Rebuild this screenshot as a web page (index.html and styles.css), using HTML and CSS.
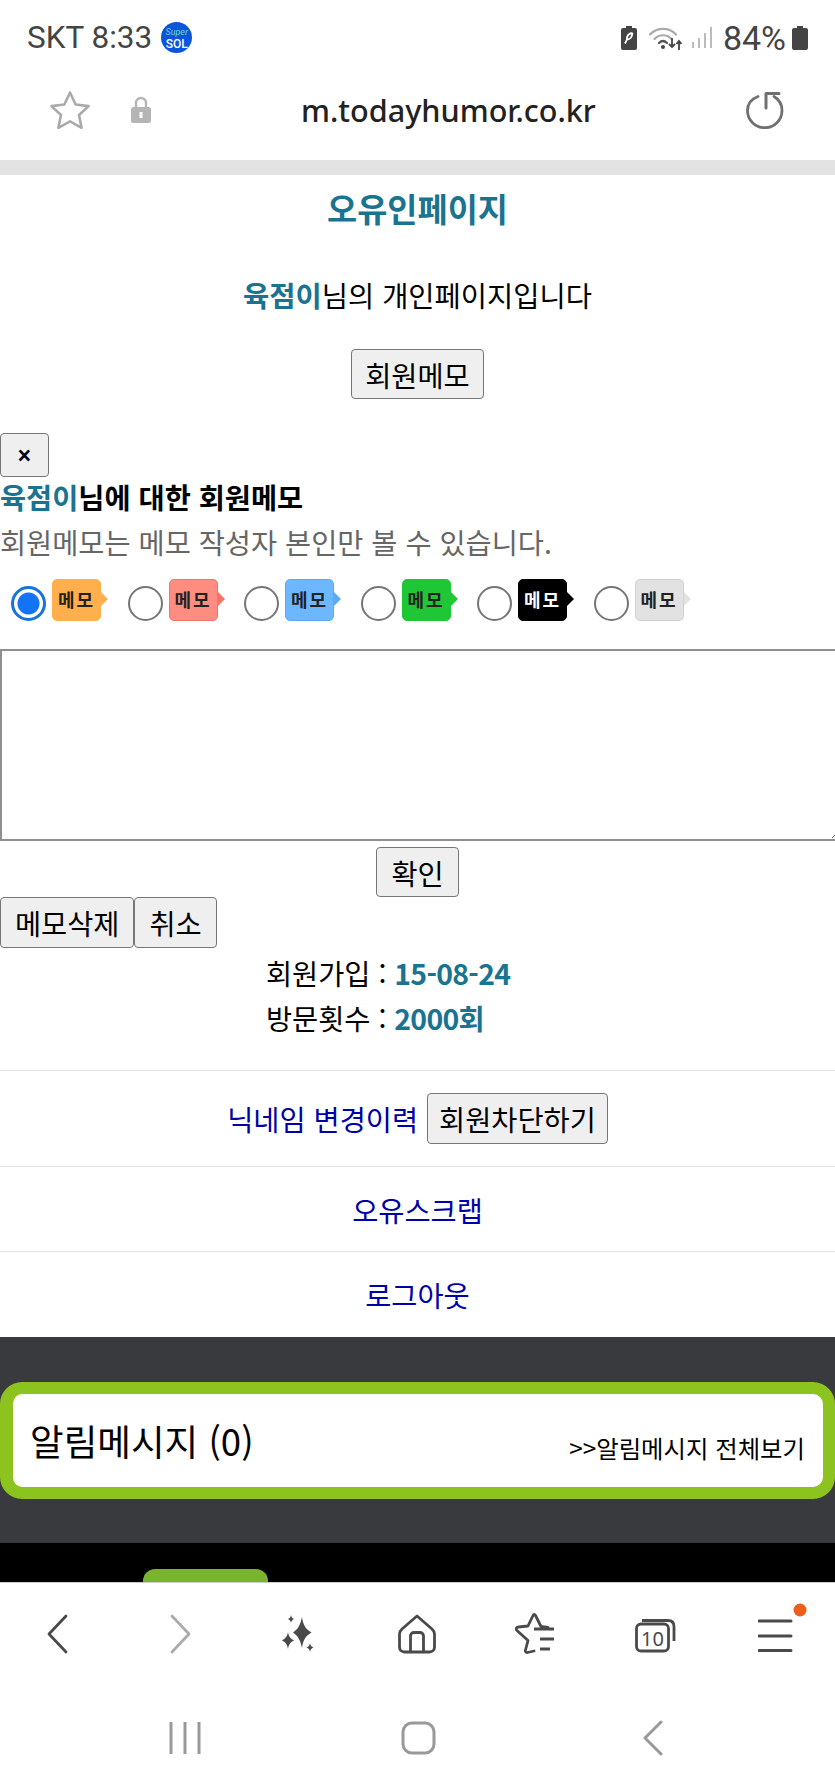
FILE: index.html
```html
<!DOCTYPE html>
<html lang="ko">
<head>
    <meta charset="UTF-8">
    <meta name="viewport" content="width=device-width, initial-scale=1.0">
    <title>오유인페이지</title>
    <link rel="stylesheet" href="styles.css">
</head>
<body>

    <!-- 상태바 -->
    <div class="status-bar">
        <span class="status-text status-left">SKT 8:33</span>
        <span class="sol-badge"><i>Super</i><b>SOL</b></span>
        <div class="status-right">
            <svg class="ic-charge" width="16" height="24" viewBox="0 0 16 24">
                <path d="M5 0h6v2h3a2 2 0 0 1 2 2v18a2 2 0 0 1-2 2H2a2 2 0 0 1-2-2V4a2 2 0 0 1 2-2h3z" fill="#444"/>
                <path d="M11.500 7c-4 .5-6 3-5.500 6.500l-2 4M6 13.500c3 0 5-2 5.500-6.500" fill="none" stroke="#fff" stroke-width="1.800"/>
            </svg>
            <svg class="ic-wifi" width="33" height="24" viewBox="0 0 33 24">
                <g fill="none" stroke="#aaa" stroke-width="2.200" stroke-linecap="round">
                    <path d="M1 8.500C8 1 20 1 27 8.500"/>
                    <path d="M5.500 13C10 8 18 8 22.500 13"/>
                </g>
                <path d="M10 17c2.500-2.500 5.500-2.500 8 0" fill="none" stroke="#555" stroke-width="2.200" stroke-linecap="round"/>
                <circle cx="14" cy="21" r="2" fill="#444"/>
                <path d="M23 12v9m-3-3 3 3 3-3" fill="none" stroke="#444" stroke-width="1.800"/>
                <path d="M30 24V15m-2.500 3 2.500-3 2.500 3" fill="none" stroke="#444" stroke-width="1.800"/>
            </svg>
            <svg class="ic-signal" width="20" height="21" viewBox="0 0 20 21">
                <g fill="#bbb">
                    <rect x="0" y="15" width="2" height="6"/>
                    <rect x="6" y="11" width="2" height="10"/>
                    <rect x="12" y="6" width="2" height="15"/>
                    <rect x="18" y="0" width="2" height="21"/>
                </g>
            </svg>
            <span class="status-text status-pct">84%</span>
            <svg class="ic-battery" width="16" height="24" viewBox="0 0 16 24">
                <path d="M5 0h6v2h3a2 2 0 0 1 2 2v18a2 2 0 0 1-2 2H2a2 2 0 0 1-2-2V4a2 2 0 0 1 2-2h3z" fill="#444"/>
            </svg>
        </div>
    </div>

    <!-- 주소창 -->
    <div class="address-bar">
        <svg class="ic-fav" width="42" height="40" viewBox="0 0 42 40">
            <path d="M21 2.500l5.600 12 13 1.600-9.600 8.900 2.600 12.800L21 31.400 9.400 37.800 12 25 2.400 16.100l13-1.600z" fill="none" stroke="#aaa" stroke-width="2.600" stroke-linejoin="round"/>
        </svg>
        <svg class="ic-lock" width="20" height="27" viewBox="0 0 20 27">
            <path d="M5 12V7a5 5 0 0 1 10 0v5" fill="none" stroke="#b5b5b5" stroke-width="2.400"/>
            <rect x="0" y="11" width="20" height="16" rx="2.500" fill="#b5b5b5"/>
            <rect x="8.500" y="16" width="3" height="6" fill="#fff"/>
        </svg>
        <span class="url">m.todayhumor.co.kr</span>
        <svg class="ic-reload" width="38" height="38" viewBox="0 0 38 38">
            <path d="M12 5.500C5.500 8 1.500 13 1.500 19.500a17 17 0 0 0 34.500 0c0-6-3-11-8-14" fill="none" stroke="#707070" stroke-width="2.800" stroke-linecap="round"/>
            <path d="M20 17V2.500h13" fill="none" stroke="#707070" stroke-width="3" stroke-linejoin="round" stroke-linecap="round"/>
        </svg>
    </div>

    <div class="gray-band"></div>

    <!-- 본문 -->
    <div class="content">
        <h1 class="page-title">오유인페이지</h1>
        <p class="profile-line"><b class="nick">육점이</b>님의 개인페이지입니다</p>
        <div class="center-row first-btn"><button class="btn">회원메모</button></div>

        <button class="btn btn-close">×</button>
        <h3 class="memo-title"><span class="nick">육점이</span>님에 대한 회원메모</h3>
        <p class="memo-note">회원메모는 메모 작성자 본인만 볼 수 있습니다.</p>

        <div class="memo-colors">
            <label class="memo-opt"><input type="radio" name="memo" checked><span class="tag tag-orange">메모</span></label>
            <label class="memo-opt"><input type="radio" name="memo"><span class="tag tag-red">메모</span></label>
            <label class="memo-opt"><input type="radio" name="memo"><span class="tag tag-blue">메모</span></label>
            <label class="memo-opt"><input type="radio" name="memo"><span class="tag tag-green">메모</span></label>
            <label class="memo-opt"><input type="radio" name="memo"><span class="tag tag-black">메모</span></label>
            <label class="memo-opt"><input type="radio" name="memo"><span class="tag tag-gray">메모</span></label>
        </div>

        <textarea class="memo-input"></textarea>
        <div class="center-row confirm-row"><button class="btn">확인</button></div>
        <div class="delete-row">
            <button class="btn">메모삭제</button><button class="btn">취소</button>
        </div>

        <div class="info">
            <div>회원가입 : <b class="nick">15-08-24</b></div>
            <div>방문횟수 : <b class="nick">2000회</b></div>
        </div>

        <div class="link-row link-row-btn"><a href="#">닉네임 변경이력</a> <button class="btn">회원차단하기</button></div>
        <div class="link-row link-row-a"><a href="#">오유스크랩</a></div>
        <div class="link-row link-row-b"><a href="#">로그아웃</a></div>
    </div>

    <!-- 알림메시지 -->
    <div class="notice-wrap">
        <div class="notice-box">
            <span class="notice-title">알림메시지 (0)</span>
            <a class="notice-all" href="#">&gt;&gt;알림메시지 전체보기</a>
        </div>
    </div>

    <div class="black-foot"><div class="green-tab"></div></div>

    <!-- 브라우저 툴바 -->
    <div class="toolbar">
        <svg class="ic-back" width="22" height="40" viewBox="0 0 22 40"><path d="M20 2 3 20l17 18" fill="none" stroke="#4a4a4a" stroke-width="2.800" stroke-linecap="round" stroke-linejoin="round"/></svg>
        <svg class="ic-next" width="22" height="40" viewBox="0 0 22 40"><path d="M2 2l17 18L2 38" fill="none" stroke="#ababab" stroke-width="2.800" stroke-linecap="round" stroke-linejoin="round"/></svg>
        <svg width="34" height="40" viewBox="0 0 34 40">
            <g fill="#4a4a4a">
                <path d="M21 3c1 7 3 12 9.500 15.500C24 22 22 27 21 34c-1.500-7-3.500-12-9-15.500C17.500 15 19.500 10 21 3z"/>
                <path d="M7 18c.6 4 1.800 6 6 8.500-4 2-5.300 4.500-6 8.500-.7-4-2-6.500-6-8.500 4-2.500 5.400-4.500 6-8.500z"/>
                <path d="M10 1c.3 2 1 3 3 4-2 1-2.700 2-3 4-.3-2-1-3-3-4 2-1 2.700-2 3-4z"/>
                <path d="M29 29c.3 2.500 1.200 3.500 3.500 4.500-2.300 1-3.200 2-3.500 4.500-.3-2.500-1.200-3.500-3.500-4.500 2.300-1 3.200-2 3.500-4.500z"/>
            </g>
        </svg>
        <svg width="38" height="40" viewBox="0 0 38 40">
            <path d="M19 2 4 15c-1.500 1.400-2.500 3-2.500 5v13c0 3 2 5 5 5h25c3 0 5-2 5-5V20c0-2-1-3.600-2.500-5z" fill="none" stroke="#4a4a4a" stroke-width="2.800" stroke-linejoin="round"/>
            <path d="M12.500 38V22c0-2 1.500-3.500 3.500-3.500h6c2 0 3.500 1.500 3.500 3.500v16" fill="none" stroke="#4a4a4a" stroke-width="2.800"/>
        </svg>
        <svg class="ic-list" width="42" height="41" viewBox="0 0 42 41">
            <path d="M20 16h20M26 26h14M26 36h10" fill="none" stroke="#4a4a4a" stroke-width="3"/>
            <path d="M20 38l-6.500 1.500c-1.500.2-2.500-1-2-2.500l2.500-9.500L3 17.500c-1.500-1.500-.5-3.500 1.500-3.500l9.500-1 5-10.500c.6-1.400 1.800-1.400 2.500 0l5.500 11 7 1" fill="none" stroke="#4a4a4a" stroke-width="2.800" stroke-linejoin="round" stroke-linecap="round"/>
        </svg>
        <svg width="42" height="38" viewBox="0 0 42 38">
            <rect x="1.500" y="9" width="32" height="27" rx="4.500" fill="none" stroke="#4a4a4a" stroke-width="2.800"/>
            <path d="M7 5.500h26c4 0 6 2 6 6V26" fill="none" stroke="#4a4a4a" stroke-width="2.800"/>
            <text x="17.500" y="31" class="tab-count">10</text>
        </svg>
        <svg width="50" height="50" viewBox="0 0 50 50" class="ic-menu">
            <path d="M1 18h32M1 33h32M1 47.500h32" fill="none" stroke="#4a4a4a" stroke-width="3" stroke-linecap="round"/>
            <circle cx="42" cy="7" r="6.500" fill="#ea5f1c"/>
        </svg>
    </div>

    <!-- 네비게이션 바 -->
    <div class="nav-bar">
        <svg width="32" height="34" viewBox="0 0 32 34"><path d="M2 1v32M16 1v32M30 1v32" fill="none" stroke="#999" stroke-width="3"/></svg>
        <svg class="ic-home-nav" width="35" height="34" viewBox="0 0 35 34"><rect x="2" y="2" width="31" height="30" rx="9" fill="none" stroke="#999" stroke-width="3"/></svg>
        <svg width="20" height="36" viewBox="0 0 20 36"><path d="M18 2 2 18l16 16" fill="none" stroke="#999" stroke-width="3" stroke-linecap="round" stroke-linejoin="round"/></svg>
    </div>

</body>
</html>
```

FILE: styles.css
```css
body {
    font-family: "Noto Sans CJK KR", "Noto Sans", sans-serif;
    background-color: #fff;
    color: #000;
    margin: 0;
    width: 835px;
    height: 1791px;
    overflow: hidden;
}

.status-bar {
    display: flex;
    align-items: center;
    height: 75px;
    padding: 0 27px;
    box-sizing: border-box;
}

.status-text {
    font-family: Roboto, "Noto Sans", sans-serif;
    font-size: 31.500px;
    color: #444;
}

.status-pct {
    font-size: 34px;
}

.sol-badge {
    display: flex;
    flex-direction: column;
    align-items: center;
    justify-content: center;
    width: 31px;
    height: 31px;
    margin-left: 9px;
    border-radius: 50%;
    background: #0b55dc;
    font-family: Roboto, sans-serif;
    line-height: 12px;
}

.sol-badge i {
    font-size: 9px;
    color: #6fd6c8;
}

.sol-badge b {
    font-size: 12px;
    font-weight: 500;
    color: #fff;
}

.status-right {
    display: flex;
    align-items: center;
    margin-left: auto;
}

.ic-wifi {
    margin-left: 12px;
}

.ic-signal {
    margin-left: 10px;
}

.status-right .status-text {
    margin-left: 11px;
}

.ic-battery {
    margin-left: 6px;
}

.address-bar {
    display: flex;
    align-items: center;
    height: 85px;
    padding: 0 51px 16px 49px;
    box-sizing: border-box;
}

.ic-lock {
    margin-left: 40px;
}

.url {
    margin-left: 150px;
    font-family: "Noto Sans", sans-serif;
    font-size: 30.600px;
    font-weight: 500;
    color: #222;
}

.ic-reload {
    margin-left: auto;
}

.gray-band {
    height: 15px;
    background: #e3e3e3;
}

.nick {
    color: #1a7390;
    font-weight: 700;
}

.page-title {
    margin: 0;
    font-size: 32.800px;
    font-weight: 700;
    line-height: 66px;
    text-align: center;
    color: #1a7390;
}

.profile-line {
    margin: 34px 0 0;
    font-size: 28.500px;
    line-height: 40px;
    text-align: center;
}

.center-row {
    text-align: center;
}

.first-btn {
    margin-top: 34px;
}

.first-btn .btn {
    padding: 0 13px;
}

.btn {
    height: 50px;
    padding: 0 14px;
    font-family: inherit;
    font-size: 28.400px;
    color: #000;
    background-color: #efefef;
    border: 1px solid #767676;
    border-radius: 4px;
    vertical-align: top;
}

.btn-close {
    display: block;
    width: 49px;
    height: 44px;
    margin-top: 34px;
    padding: 0;
    font-family: Roboto, sans-serif;
    font-size: 25px;
    font-weight: 500;
}

.memo-title {
    margin: 0;
    font-size: 28.400px;
    font-weight: 700;
    line-height: 40px;
}

.memo-note {
    margin: 5px 0 0;
    font-size: 28.400px;
    line-height: 40px;
    color: #666;
}

.memo-colors {
    display: flex;
    margin-top: 17px;
    padding-left: 11px;
}

.memo-opt {
    display: flex;
    align-items: flex-end;
    width: 116.500px;
}

.memo-opt input {
    appearance: none;
    box-sizing: border-box;
    width: 35px;
    height: 35px;
    margin: 0 6px 0 0;
    border: 2.500px solid #767676;
    border-radius: 50%;
    background: #fff;
}

.memo-opt input:checked {
    border: 3px solid #1a73d9;
    background: radial-gradient(circle, #1273f5 0 10.500px, #fff 11.500px);
}

.tag {
    position: relative;
    display: block;
    box-sizing: border-box;
    width: 49px;
    height: 42px;
    border-radius: 5px;
    border: 1px solid;
    font-size: 18px;
    font-weight: 700;
    line-height: 38px;
    letter-spacing: 2px;
    text-align: center;
    color: #222;
}

/* 말풍선 꼬리 */
.tag::after {
    content: "";
    position: absolute;
    top: 12px;
    right: -8px;
    border-left: 7px solid;
    border-top: 7px solid transparent;
    border-bottom: 7px solid transparent;
    border-left-color: inherit;
}

.tag-orange { background: #ffb04c; border-color: #ffb04c; }
.tag-red { background: #ff8c80; border-color: #f47468; }
.tag-blue { background: #6cb7ff; border-color: #5caaf5; }
.tag-green { background: #1fc636; border-color: #1fc636; }
.tag-black { background: #000; border-color: #000; color: #fff; }
.tag-gray { background: #e2e2e2; border-color: #d2d2d2; }
.tag-gray::after { border-left-color: #e2e2e2; }

/* 오른쪽 테두리는 화면 밖으로 나감 */
.memo-input {
    display: block;
    box-sizing: border-box;
    width: 841px;
    height: 192px;
    margin: 28px 0 0;
    border: solid #8f8f8f;
    border-width: 2px 1px 2px 2px;
    background: #fff;
}

.confirm-row {
    margin-top: 6px;
}

.delete-row {
    display: flex;
    align-items: flex-start;
}

.delete-row .btn {
    height: 51px;
}

.info {
    margin-top: 2px;
    padding-left: 266px;
    font-size: 28.400px;
    line-height: 45px;
}

.info .nick {
    letter-spacing: -0.700px;
}

.link-row {
    display: flex;
    align-items: center;
    justify-content: center;
    gap: 9px;
    border-top: 1px solid #e2e2e2;
    font-size: 28.400px;
}

.link-row a {
    color: #0000a8;
    text-decoration: none;
}

.link-row-btn {
    height: 95px;
    margin-top: 30px;
}

.link-row-btn .btn {
    height: 51px;
    padding: 0 11px;
}

.link-row-a {
    height: 84px;
}

.link-row-b {
    height: 85px;
}

.notice-wrap {
    height: 206px;
    padding-top: 45px;
    box-sizing: border-box;
    background: #393a3e;
}

.notice-box {
    display: flex;
    align-items: center;
    justify-content: space-between;
    height: 93px;
    padding: 0 18px 0 17px;
    background: #fff;
    border: solid #8dc31f;
    border-width: 12px 12px 12px 13px;
    border-radius: 22px;
}

.notice-title {
    font-size: 36.600px;
}

.notice-all {
    padding-top: 13px;
    font-size: 24.400px;
    color: #000;
    text-decoration: none;
}

.black-foot {
    height: 39px;
    background: #000;
    overflow: hidden;
}

.green-tab {
    width: 125px;
    height: 20px;
    margin: 26px 0 0 143px;
    background: #7ab32e;
    border-radius: 12px 12px 0 0;
}

.toolbar {
    display: grid;
    grid-template-columns: repeat(7, 1fr);
    justify-items: center;
    align-items: center;
    height: 108px;
    border-top: 1px solid #ccc;
    box-sizing: border-box;
    padding-bottom: 6px;
}

.ic-back {
    transform: translateX(-3px);
}

.ic-next {
    transform: translateX(2px);
}

.ic-list {
    transform: translateX(-2px);
}

.ic-menu {
    justify-self: start;
    margin-left: 42px;
    margin-top: -12px;
}

.tab-count {
    font-family: "Noto Sans", sans-serif;
    font-size: 20px;
    fill: #4a4a4a;
    text-anchor: middle;
}

.nav-bar {
    display: flex;
    justify-content: space-between;
    align-items: center;
    height: 101px;
    padding: 0 172px 6px 169px;
    box-sizing: border-box;
}

.ic-home-nav {
    margin-right: 7px;
}
```
